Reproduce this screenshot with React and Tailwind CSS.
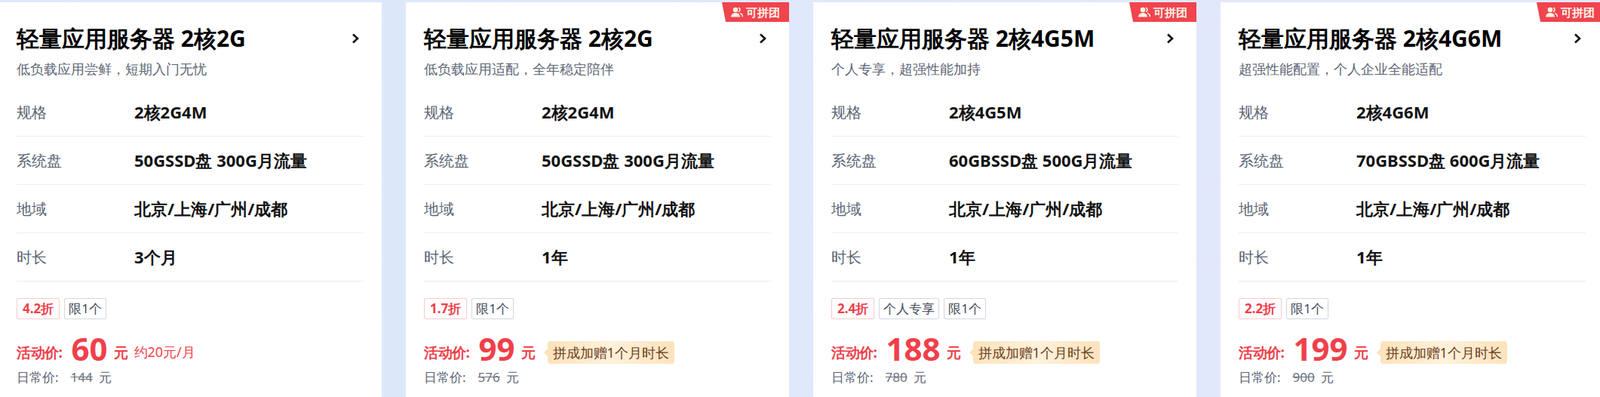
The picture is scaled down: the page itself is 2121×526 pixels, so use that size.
const cards = [
  { title: "轻量应用服务器 2核2G", sub: "低负载应用尝鲜，短期入门无忧", spec: "2核2G4M", disk: "50GSSD盘 300G月流量", dur: "3个月", tags: [], disc: "4.2折", price: "60", extra: "约20元/月", orig: "144", group: false },
  { title: "轻量应用服务器 2核2G", sub: "低负载应用适配，全年稳定陪伴", spec: "2核2G4M", disk: "50GSSD盘 300G月流量", dur: "1年", tags: [], disc: "1.7折", price: "99", orig: "576", group: true },
  { title: "轻量应用服务器 2核4G5M", sub: "个人专享，超强性能加持", spec: "2核4G5M", disk: "60GBSSD盘 500G月流量", dur: "1年", tags: ["个人专享"], disc: "2.4折", price: "188", orig: "780", group: true },
  { title: "轻量应用服务器 2核4G6M", sub: "超强性能配置，个人企业全能适配", spec: "2核4G6M", disk: "70GBSSD盘 600G月流量", dur: "1年", tags: [], disc: "2.2折", price: "199", orig: "900", group: true },
];

function Row({ label, value }) {
  return (
    <div className="flex items-center h-[64px] border-b border-[#eceef2]">
      <div className="w-[156px] text-[20px] text-[#5b6474]">{label}</div>
      <div className="text-[22px] font-bold text-[#111]">{value}</div>
    </div>
  );
}

function Card({ c }) {
  return (
    <div className="relative w-[508px] shrink-0 bg-white px-6 pt-[27px] h-[523px]">
      {c.group && (
        <div className="absolute top-0 right-0 h-[26px] w-[89px] bg-[#f0444e] flex items-center justify-center gap-1 text-[15px] font-bold text-[#fff3e8] [clip-path:polygon(0_0,100%_0,100%_100%,5px_100%)]">
          <svg width="16" height="14" viewBox="0 0 16 14" fill="#fff1e0"><circle cx="6" cy="4" r="3.3"/><path d="M0 13.5c0-3.3 2.7-5.5 6-5.5s6 2.2 6 5.5z"/><path d="M10 1.2a3 3 0 0 1 0 5.6M12 8.5c2 .7 3.5 2.5 3.5 5" stroke="#fff1e0" strokeWidth="1.6" fill="none"/></svg>
          <span>可拼团</span>
        </div>
      )}
      <div className="flex items-center justify-between h-[42px]">
        <div className="text-[30px] font-bold text-black leading-none">{c.title}</div>
        <svg width="14" height="16" viewBox="0 0 14 16" className="mr-1"><path d="M4 2.5l6 5.5-6 5.5" stroke="#111" strokeWidth="2.6" fill="none"/></svg>
      </div>
      <div className="mt-[6px] text-[18px] text-[#5d6675]">{c.sub}</div>
      <div className="mt-[12px]">
        <Row label="规格" value={c.spec} />
        <Row label="系统盘" value={c.disk} />
        <Row label="地域" value="北京/上海/广州/成都" />
        <Row label="时长" value={c.dur} />
      </div>
      <div className="flex gap-[6px] mt-[22px]">
        <span className="h-[28px] px-[7px] flex items-center border border-[#fcc9cc] text-[#f0404a] font-bold text-[17px] rounded-[2px]">{c.disc}</span>
        {c.tags.map(t => <span key={t} className="h-[28px] px-[5px] flex items-center border border-[#d2d6e0] text-[#444b58] text-[17px] rounded-[2px]">{t}</span>)}
        <span className="h-[28px] px-[5px] flex items-center border border-[#d2d6e0] text-[#444b58] text-[17px] rounded-[2px]">限1个</span>
      </div>
      <div className="flex items-end mt-[12px] h-[48px]">
        <span className="text-[19px] font-bold text-[#f0404a] mb-[2px] tracking-tight">活动价:</span>
        <span className="text-[42px] font-bold text-[#f0404a] leading-none ml-3">{c.price}</span>
        <span className="text-[19px] font-bold text-[#f0404a] ml-2 mb-[2px]">元</span>
        {c.extra ? (
          <span className="text-[18px] text-[#f0404a] ml-2 mb-[3px]">{c.extra}</span>
        ) : (
          <span className="relative ml-4 mb-[1px] h-[30px] px-[7px] flex items-center rounded-[4px] bg-gradient-to-r from-[#fde2bb] via-[#fff1dc] to-[#fde2bb] text-[18px] text-[#6b3f1c]">
            <span className="absolute -left-[5px] top-[10px] w-0 h-0 border-y-[5px] border-y-transparent border-r-[5px] border-r-[#fde2bb]" />
            拼成加赠1个月时长
          </span>
        )}
      </div>
      <div className="mt-[4px] text-[17px] text-[#5b6474] flex">
        <span>日常价:</span>
        <span className="ml-4 line-through text-[#6b7280]">{c.orig}</span>
        <span className="ml-2">元</span>
      </div>
    </div>
  );
}

export default function App() {
  return (
    <div className="w-[2121px] h-[526px] overflow-hidden bg-gradient-to-r from-[#dbe8fb] to-[#e4e7fb] pt-[3px] font-['Liberation_Sans','Noto_Sans_CJK_SC',sans-serif]">
      <div className="flex gap-[32px] -ml-[2px]">
        {cards.map((c, i) => <Card key={i} c={c} />)}
      </div>
    </div>
  );
}
